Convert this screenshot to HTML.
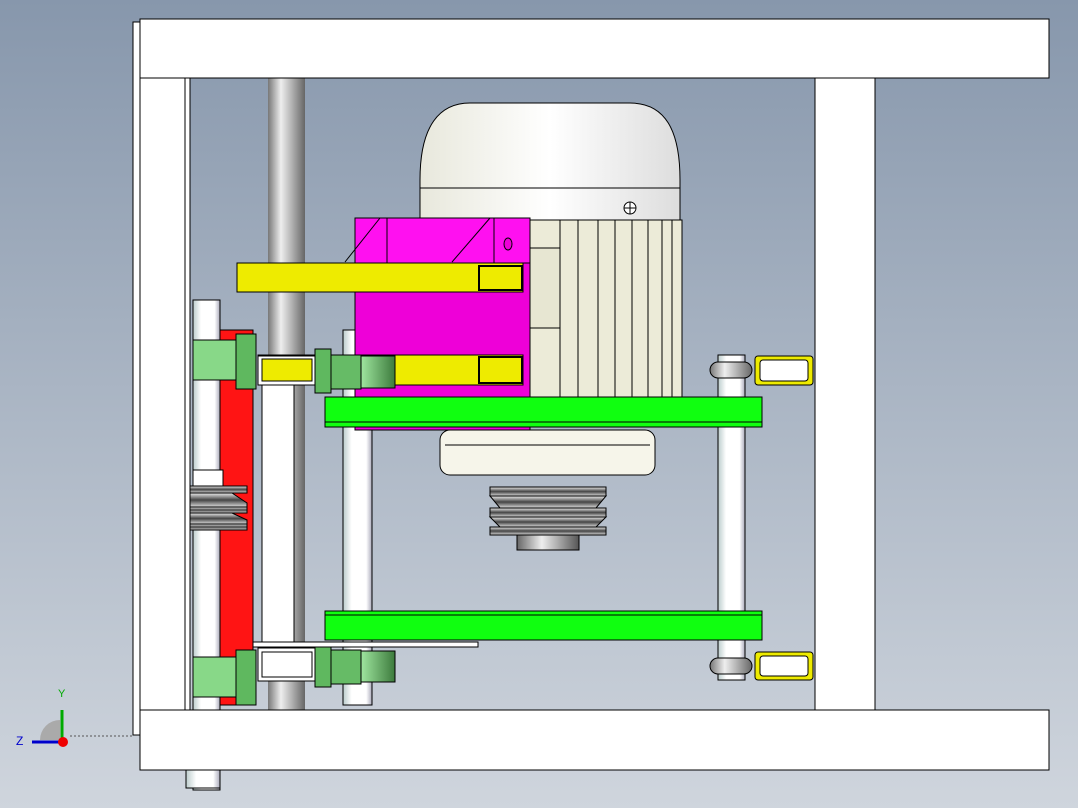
<!DOCTYPE html>
<html><head><style>html,body{margin:0;padding:0;width:1078px;height:808px;overflow:hidden}body{background:linear-gradient(#8797ac,#cfd5dd)}svg{display:block}</style></head>
<body>
<svg width="1078" height="808" viewBox="0 0 1078 808" xmlns="http://www.w3.org/2000/svg" stroke="#000" stroke-width="1">
<defs>
<linearGradient id="rod" x1="0" x2="1"><stop offset="0" stop-color="#777"/><stop offset=".35" stop-color="#eee"/><stop offset=".6" stop-color="#bbb"/><stop offset="1" stop-color="#666"/></linearGradient>
<linearGradient id="wrod" x1="0" x2="1"><stop offset="0" stop-color="#bcc"/><stop offset=".3" stop-color="#fff"/><stop offset=".8" stop-color="#fff"/><stop offset="1" stop-color="#aab"/></linearGradient>
<linearGradient id="dome" x1="0" x2="1"><stop offset="0" stop-color="#e8e8dc"/><stop offset=".5" stop-color="#fff"/><stop offset="1" stop-color="#ddd"/></linearGradient>
<linearGradient id="gc" x1="0" x2="1"><stop offset="0" stop-color="#9fe69f"/><stop offset="1" stop-color="#3c7a3c"/></linearGradient>
<linearGradient id="pul" x1="0" x2="0" y1="0" y2="1"><stop offset="0" stop-color="#eee"/><stop offset=".5" stop-color="#444"/><stop offset="1" stop-color="#ddd"/></linearGradient>
<linearGradient id="hub" x1="0" x2="1"><stop offset="0" stop-color="#666"/><stop offset=".4" stop-color="#eee"/><stop offset="1" stop-color="#555"/></linearGradient>
</defs>
<rect x="133" y="22" width="7" height="713" fill="#fff"/>
<rect x="268" y="78" width="37" height="632" fill="url(#rod)" stroke="none"/>
<rect x="193" y="300" width="27" height="490" fill="url(#wrod)"/>
<rect x="220" y="330" width="33" height="375" fill="#ff1414"/>
<rect x="343" y="330" width="29" height="375" fill="url(#wrod)"/>
<rect x="718" y="355" width="27" height="325" fill="url(#wrod)"/>
<!-- small pulley left -->
<rect x="193" y="470" width="30" height="16" fill="#fff"/>
<g fill="url(#pul)">
<rect x="190" y="486" width="57" height="7"/>
<path d="M190,493H232L247,503V507H232L190,507Z"/>
<rect x="190" y="507" width="57" height="6"/>
<path d="M190,513H232L247,520V524H190Z"/>
<rect x="190" y="524" width="57" height="6"/>
</g>
<rect x="262" y="385" width="32" height="260" fill="#fff"/>
<!-- motor dome -->
<path d="M420,220 L420,180 C420,125 440,103 470,103 L630,103 C665,103 680,130 680,180 L680,220 Z" fill="url(#dome)"/>
<line x1="420" y1="188" x2="680" y2="188"/>
<circle cx="630" cy="208" r="6" fill="#fff"/><path d="M624,208h12M630,202v12"/>
<rect x="530" y="220" width="152" height="178" fill="#ecebd8"/>
<path d="M560,220v178M578,220v178M598,220v178M615,220v178M632,220v178M648,220v178M662,220v178M672,220v178"/>
<rect x="530" y="248" width="30" height="80" fill="#e7e6d2"/>
<!-- motor bottom -->
<rect x="440" y="430" width="215" height="45" rx="10" fill="#f6f5ea"/>
<line x1="445" y1="445" x2="650" y2="445"/>
<g fill="url(#pul)">
<rect x="490" y="487" width="116" height="9"/>
<path d="M490,496H606L596,508H500Z"/>
<rect x="490" y="508" width="116" height="9"/>
<path d="M490,517H606L596,527H500Z"/>
<rect x="490" y="527" width="116" height="8"/>
</g>
<rect x="517" y="535" width="62" height="15" fill="url(#hub)"/>
<!-- magenta -->
<rect x="355" y="218" width="175" height="212" fill="#ee00d8"/>
<rect x="355" y="218" width="175" height="45" fill="#ff10f0"/>
<path d="M345,262L380,218M452,262L490,218M387,218v45M494,218v45"/>
<ellipse cx="508" cy="244" rx="4" ry="6" fill="#ee00d8"/>
<rect x="237" y="263" width="286" height="29" fill="#eeeb00"/>
<rect x="479" y="266" width="43" height="24" fill="#eeeb00" stroke-width="2"/>
<rect x="258" y="355" width="265" height="30" fill="#eeeb00"/>
<rect x="479" y="357" width="43" height="26" fill="#eeeb00" stroke-width="2"/>
<rect x="258" y="356" width="57" height="29" fill="#fff"/>
<rect x="262" y="359" width="50" height="22" fill="#eeeb00"/>
<rect x="325" y="397" width="437" height="30" fill="#10ff10"/>
<line x1="325" y1="422" x2="762" y2="422"/>
<rect x="325" y="611" width="437" height="29" fill="#10ff10"/>
<line x1="325" y1="615" x2="762" y2="615"/>
<rect x="253" y="642" width="225" height="5" fill="#fff"/>
<rect x="258" y="648" width="57" height="33" fill="#fff"/>
<rect x="262" y="652" width="50" height="25" fill="#fff"/>
<rect x="193" y="340" width="43" height="40" fill="#88d888"/>
<rect x="236" y="334" width="20" height="55" fill="#5fb85f"/>
<rect x="193" y="657" width="43" height="40" fill="#88d888"/>
<rect x="236" y="650" width="20" height="55" fill="#5fb85f"/>
<rect x="315" y="349" width="16" height="44" fill="#5fb85f"/>
<rect x="331" y="355" width="30" height="34" fill="#66bb66"/>
<rect x="361" y="356" width="34" height="32" fill="url(#gc)"/>
<rect x="315" y="647" width="16" height="40" fill="#5fb85f"/>
<rect x="331" y="650" width="30" height="34" fill="#66bb66"/>
<rect x="361" y="651" width="34" height="31" fill="url(#gc)"/>
<rect x="710" y="362" width="42" height="16" rx="8" fill="url(#rod)"/>
<rect x="755" y="356" width="58" height="29" rx="3" fill="#eeeb00"/><rect x="760" y="360" width="48" height="21" rx="3" fill="#fff"/>
<rect x="710" y="658" width="42" height="16" rx="8" fill="url(#rod)"/>
<rect x="755" y="652" width="58" height="28" rx="3" fill="#eeeb00"/><rect x="760" y="656" width="48" height="20" rx="3" fill="#fff"/>
<rect x="140" y="78" width="50" height="632" fill="#fff"/>
<line x1="185" y1="78" x2="185" y2="710"/>
<rect x="815" y="78" width="60" height="632" fill="#fff"/>
<rect x="140" y="19" width="909" height="59" fill="#fff"/>
<rect x="140" y="710" width="909" height="60" fill="#fff"/>
<rect x="186" y="770" width="34" height="18" fill="url(#wrod)"/>
<path d="M40,740 A20,20 0 0 1 60,720 L60,740Z" fill="#aaa" stroke="none"/>
<line x1="62" y1="740" x2="62" y2="710" stroke="#0a0" stroke-width="3"/>
<line x1="62" y1="742" x2="32" y2="742" stroke="#00c" stroke-width="3"/>
<circle cx="63" cy="742" r="5" fill="#e00" stroke="none"/>
<line x1="70" y1="736" x2="133" y2="736" stroke="#555" stroke-dasharray="2,2"/>
<text x="58" y="697" font-family="Liberation Sans" font-size="11" fill="#0a0" stroke="none">Y</text>
<text x="16" y="745" font-family="Liberation Sans" font-size="12" fill="#00c" stroke="none">Z</text>
</svg>
</body></html>
